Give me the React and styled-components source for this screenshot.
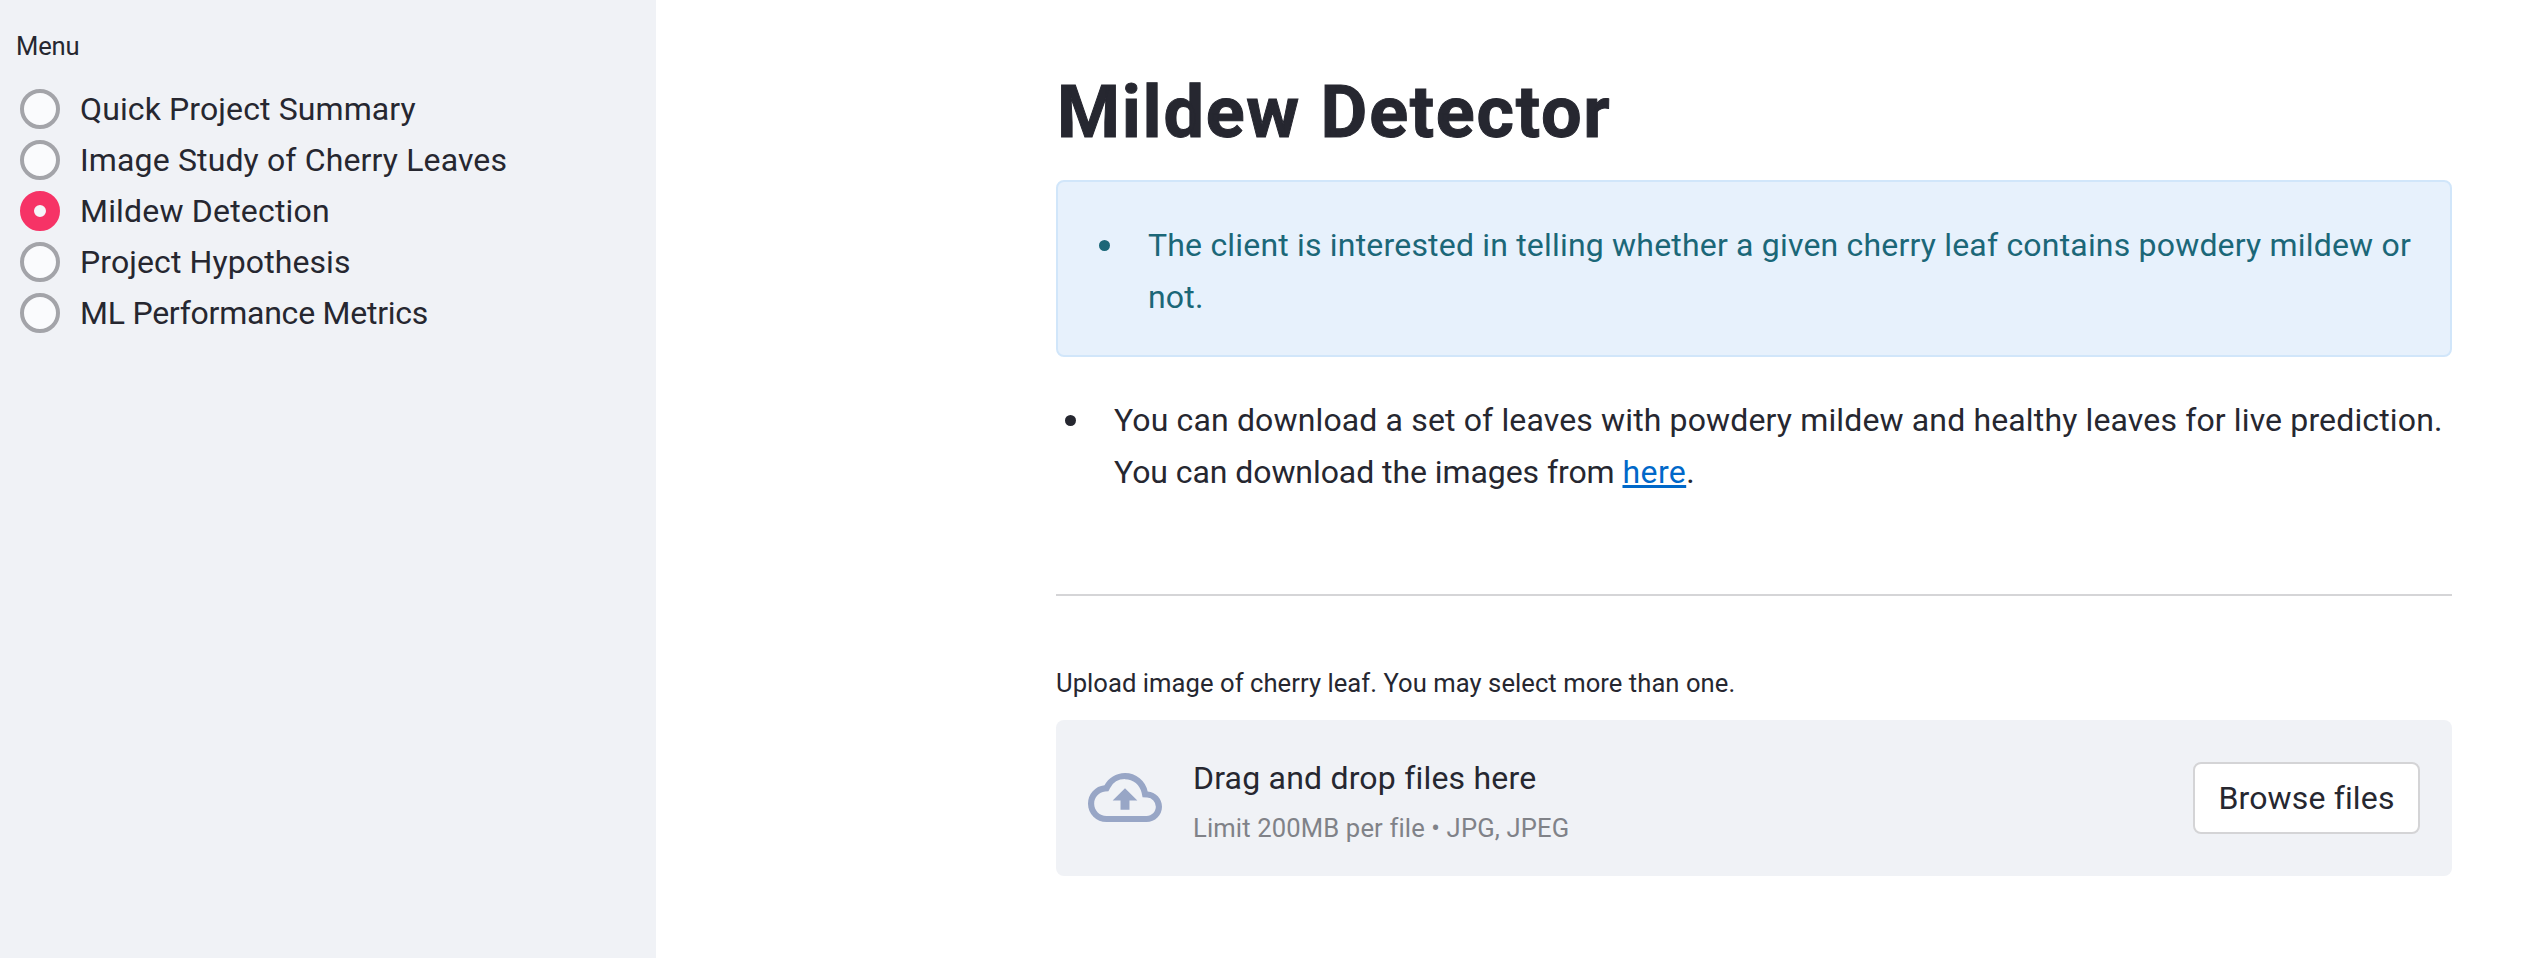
import React, { useState } from 'react';
import styled, { createGlobalStyle } from 'styled-components';

const GlobalStyle = createGlobalStyle`
  * { box-sizing: border-box; }
  body {
    margin: 0;
    background: #ffffff;
    color: #262730;
    font-family: Roboto, "Liberation Sans", sans-serif;
    font-size: 32px;
    line-height: 51.2px;
  }
`;

const Page = styled.div`
  display: flex;
  min-height: 958px;
`;

const Sidebar = styled.aside`
  flex: 0 0 656px;
  padding: 26.25px 16px 0;
  background: #f0f2f6;
`;

const MenuLabel = styled.div`
  height: 40px;
  margin-bottom: 16.75px;
  font-size: 25.6px;
  line-height: 40px;
  letter-spacing: -0.15px;
`;

const Option = styled.label`
  display: flex;
  align-items: center;
  gap: 20px;
  height: 51.2px;
  padding-left: 4px;
  white-space: nowrap;
  cursor: pointer;
`;

const HiddenInput = styled.input`
  display: none;
`;

const RadioMark = styled.span`
  flex: none;
  width: 40px;
  height: 40px;
  border-radius: 50%;
  border: ${(p) => (p.$on ? '14px solid #f63366' : '4px solid #a3a4a9')};
  background: ${(p) => (p.$on ? '#f5f6f9' : '#fafbfd')};
`;

const Tracked = styled.span`
  letter-spacing: ${(p) => p.$by}px;
`;

const OptionText = styled(Tracked)`
  padding-top: 1px;
`;

const Main = styled.main`
  flex: 1;
  padding: 69px 76px 0 400px;
`;

const Title = styled.h1`
  height: 87px;
  margin: 0 0 24px;
  padding-left: 1px;
  font-size: 72px;
  font-weight: 700;
  line-height: 87px;
  letter-spacing: 1.75px;
  -webkit-text-stroke: 1px currentColor;
`;

const InfoBox = styled.div`
  height: 177px;
  padding: 38.4px 32px 0 41px;
  border: 2px solid #d1e6fa;
  border-radius: 8px;
  background: #e7f1fc;
  color: #1b6778;
`;

const Bullets = styled.ul`
  margin: 0;
  padding: 0;
  list-style: none;
`;

const BulletItem = styled.li`
  display: flex;
  gap: 38px;

  &::before {
    content: '';
    flex: none;
    width: 11px;
    height: 11px;
    margin-top: 20px;
    border-radius: 50%;
    background: currentColor;
  }
`;

const Notes = styled.section`
  padding: 38.4px 0 0 9px;
`;

const Link = styled.a`
  color: #0068c9;
  letter-spacing: 0.4px;
  text-decoration: underline;
  text-decoration-thickness: 3px;
  text-underline-offset: 2px;
`;

const Divider = styled.hr`
  height: 2px;
  margin: 96.2px 0 67.25px;
  border: 0;
  background: #d5d5d7;
`;

const UploadLabel = styled.div`
  height: 40px;
  margin-bottom: 16.75px;
  font-size: 25.6px;
  line-height: 40px;
  letter-spacing: 0.05px;
`;

const Dropzone = styled.section`
  display: flex;
  align-items: center;
  height: 156px;
  padding: 0 32px;
  border-radius: 8px;
  background: #f0f2f6;
`;

const CloudIcon = styled.svg`
  flex: none;
  width: 74px;
  height: 49px;
  fill: #98a6c6;
`;

const DropText = styled.div`
  display: flex;
  flex-direction: column;
  align-self: flex-start;
  gap: 3.4px;
  margin: 33px auto 0 31px;
`;

const DropTitle = styled.span`
  letter-spacing: 0.2px;
`;

const DropHint = styled.small`
  color: #808288;
  font-size: 25.6px;
  line-height: 41px;
  letter-spacing: 0.14px;
`;

const BrowseButton = styled.button`
  width: 227px;
  height: 72px;
  padding: 0;
  border: 2px solid #d4d4d6;
  border-radius: 8px;
  background: #ffffff;
  color: inherit;
  font: inherit;
  line-height: 68px;
  letter-spacing: 0.15px;
  cursor: pointer;
`;

const PAGES = [
  { name: 'Quick Project Summary', tracking: 0.11 },
  { name: 'Image Study of Cherry Leaves', tracking: 0.14 },
  { name: 'Mildew Detection', tracking: 0.19 },
  { name: 'Project Hypothesis', tracking: 0.1 },
  { name: 'ML Performance Metrics', tracking: -0.24 },
];

export default function App() {
  const [page, setPage] = useState('Mildew Detection');
  return (
    <>
      <GlobalStyle />
      <Page>
        <Sidebar>
          <MenuLabel>Menu</MenuLabel>
          {PAGES.map(({ name, tracking }) => (
            <Option key={name}>
              <HiddenInput
                type="radio"
                name="page"
                checked={page === name}
                onChange={() => setPage(name)}
              />
              <RadioMark $on={page === name} />
              <OptionText $by={tracking}>{name}</OptionText>
            </Option>
          ))}
        </Sidebar>
        <Main>
          <Title>Mildew Detector</Title>
          <InfoBox>
            <Bullets>
              <BulletItem>
                <Tracked $by={0.188}>
                  The client is interested in telling whether a given cherry leaf contains powdery
                  mildew or not.
                </Tracked>
              </BulletItem>
            </Bullets>
          </InfoBox>
          <Notes>
            <Bullets>
              <BulletItem>
                <div>
                  <Tracked $by={0.14}>
                    You can download a set of leaves with powdery mildew and healthy leaves for live
                    prediction.
                  </Tracked>{' '}
                  <Tracked $by={-0.07}>You can download the images from </Tracked>
                  <Link href="#">here</Link>.
                </div>
              </BulletItem>
            </Bullets>
          </Notes>
          <Divider />
          <UploadLabel>Upload image of cherry leaf. You may select more than one.</UploadLabel>
          <Dropzone>
            <CloudIcon viewBox="0 4 24 16" preserveAspectRatio="none">
              <path d="M19.35 10.04A7.49 7.49 0 0 0 12 4C9.11 4 6.6 5.64 5.35 8.04A5.994 5.994 0 0 0 0 14c0 3.31 2.69 6 6 6h13c2.76 0 5-2.24 5-5 0-2.64-2.05-4.78-4.65-4.96zM19 18H6c-2.21 0-4-1.79-4-4 0-2.05 1.53-3.76 3.56-3.97l1.07-.11.5-.95A5.469 5.469 0 0 1 12 6c2.62 0 4.88 1.86 5.39 4.43l.3 1.5 1.53.11A2.98 2.98 0 0 1 22 15c0 1.65-1.35 3-3 3zM8 13h2.55v3h2.9v-3H16l-4-4z" />
            </CloudIcon>
            <DropText>
              <DropTitle>Drag and drop files here</DropTitle>
              <DropHint>Limit 200MB per file • JPG, JPEG</DropHint>
            </DropText>
            <BrowseButton type="button">Browse files</BrowseButton>
          </Dropzone>
        </Main>
      </Page>
    </>
  );
}
